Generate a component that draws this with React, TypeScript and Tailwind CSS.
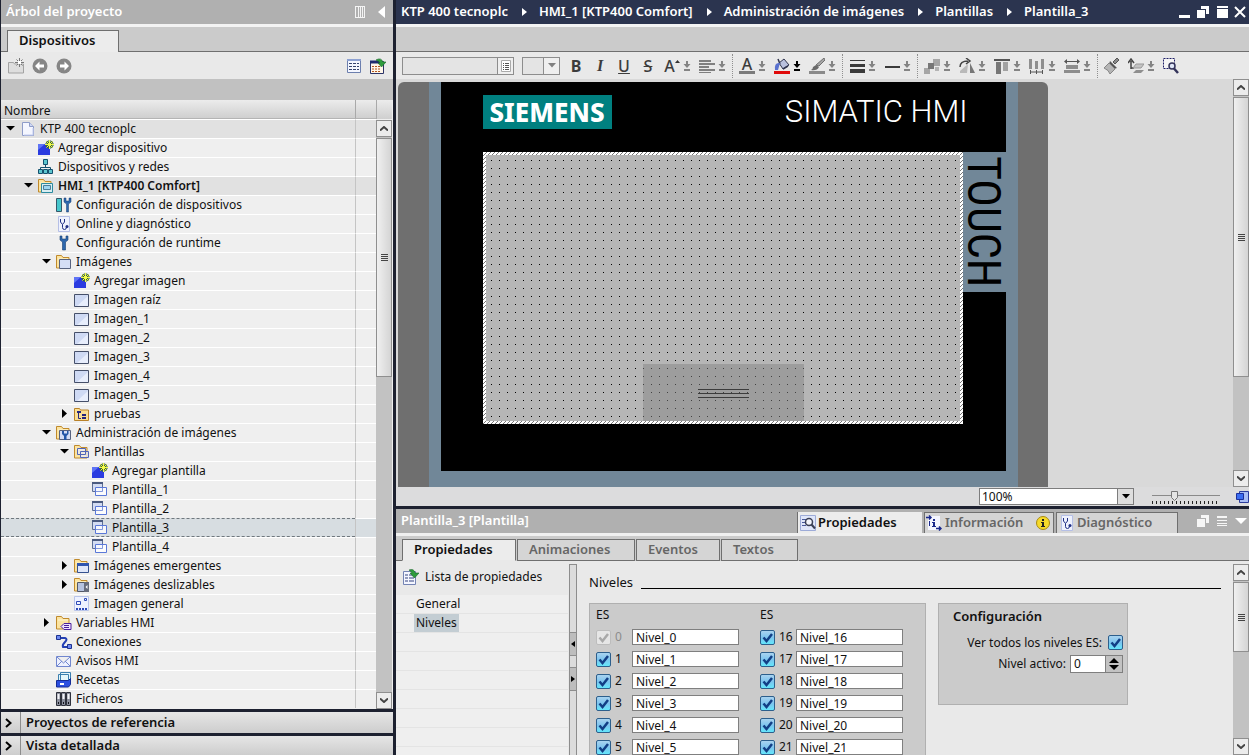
import type { ReactNode } from "react";
import clsx from "clsx";

/* ─── Small glyphs ────────────────────────────────────────────────────── */
const Svg = ({ children, w = 16, h = 16, className }: { children: ReactNode; w?: number; h?: number; className?: string }) => (
  <svg width={w} height={h} viewBox={`0 0 ${w} ${h}`} className={clsx("block shrink-0", className)} aria-hidden="true">
    {children}
  </svg>
);

const folder = (
  <>
    <path d="M.5 1.500h5l1.500 2h6v10.500H.5z" fill="#fbe3a0" stroke="#c08a2c" />
    <path d="M2 5h10" stroke="#fff4cf" />
  </>
);

const icons: Record<string, ReactNode> = {
  page: (
    <>
      <path d="M2.500 1.500h7l4 4v9h-11z" fill="#f4f6ff" stroke="#8e9cc9" />
      <path d="M9.500 1.500v4h4" fill="#cfd8f4" stroke="#8e9cc9" />
      <path d="M4 14h9V7" fill="none" stroke="#c3cdf0" />
    </>
  ),
  add: (
    <>
      <path d="M0 4h12v11H0z" fill="#2a3be0" />
      <path d="M0 4h7L0 10z" fill="#5f74f5" />
      <path d="M11.500 0v9M7 4.500h9M8.500 1.500l6 6M14.500 1.500l-6 6" stroke="#3f6a2a" strokeWidth="2" />
      <path d="M11.500 0v9M7 4.500h9M8.500 1.500l6 6M14.500 1.500l-6 6" stroke="#f4fb4a" />
    </>
  ),
  network: (
    <>
      <path d="M7.500 5v4M2.500 11V8.500h10V11" fill="none" stroke="#14506e" />
      <path d="M5.500.5h4v5h-4zM.5 10.500h4v4h-4zM5.500 10.500h4v4h-4zM10.500 10.500h4v4h-4z" fill="#5cc6cf" stroke="#14506e" />
    </>
  ),
  station: (
    <>
      {folder}
      <path d="M3.500 5.500h11v9h-11z" fill="#d9eef2" stroke="#2b8ba0" />
      <path d="M5.500 7.500h7v4h-7z" fill="#9fd6ef" stroke="#4c7f98" />
    </>
  ),
  devconf: (
    <>
      <path d="M.5 1.500h5v13h-5z" fill="#45c6cc" stroke="#34576a" />
      <path d="M8 1v4l2.500 2v8h2V7L15 5V1h-2v3h-3V1z" fill="#2d67ad" stroke="#173f74" strokeWidth="0.500" />
    </>
  ),
  diag: (
    <>
      <path d="M2.500.5h11v15h-11z" fill="#eef1fd" stroke="#b5bfe6" />
      <path d="M4.500 3v3l2 2.500 2-2.500V3M6.500 8.500v3q0 2 2 2t2-2.500" fill="none" stroke="#1f2f85" />
      <circle cx="11" cy="10.500" r="1.500" fill="#1f2f85" />
    </>
  ),
  wrench: <path d="M4 1v4l2.500 2v8h3V7L12 5V1h-2v3H6V1z" fill="#2d67ad" stroke="#173f74" strokeWidth="0.600" />,
  images: (
    <>
      {folder}
      <path d="M3.500 5.500h11v9h-11z" fill="#d4def5" stroke="#56627f" />
    </>
  ),
  image: (
    <>
      <path d="M.5 2.500h14v12H.5z" fill="#cfdaf4" stroke="#46506a" />
      <path d="M14 4v10H3z" fill="#e8eefc" />
    </>
  ),
  group: (
    <>
      <path d="M.5 2.500h5l1 1.500h8v10.500H.5z" fill="#fbdf92" stroke="#b9822a" />
      <path d="M4 6.500h3M4.500 7v5.500H7" fill="none" stroke="#26267c" />
      <path d="M3 5h4v2H3zM8 8h4v2H8zM8 11h4v2H8z" fill="#26267c" />
    </>
  ),
  admin: (
    <>
      {folder}
      <path d="M3.500 5.500h11v9h-11z" fill="#d4def5" stroke="#56627f" />
      <path d="M6 6v3l2 2v4h2.500v-4l2-2V6H11v2.500H8V6z" fill="#2458a8" />
    </>
  ),
  templates: (
    <>
      {folder}
      <path d="M3.500 4.500h8v6h-8zM6.500 7.500h8v6h-8z" fill="#e8edfb" fillOpacity="0.700" stroke="#5165b8" />
    </>
  ),
  template: (
    <>
      <path d="M.5.5h10v9H.5z" fill="#d3dcf2" stroke="#5d6f96" />
      <path d="M0 1h11" stroke="#4b5b80" strokeWidth="2" />
      <path d="M3.500 5.500h11v8h-11z" fill="#fff" fillOpacity="0.800" stroke="#5a78d8" />
      <path d="M4 9.500h6.500V6" fill="none" stroke="#8197dc" />
    </>
  ),
  popup: (
    <>
      {folder}
      <path d="M3.500 5.500h11v9h-11z" fill="#dfe7fa" stroke="#35518f" />
      <path d="M3 6.500h12" stroke="#2f55b0" strokeWidth="3" />
    </>
  ),
  slide: (
    <>
      {folder}
      <path d="M3.500 5.500h11v9h-11z" fill="#b6c3e0" stroke="#525868" />
      <path d="M10 5h5v10h-5z" fill="#666c7c" />
      <path d="M13.500 8v4l-2-2z" fill="#fff" />
    </>
  ),
  general: (
    <>
      <path d="M.5.5h14v14H.5z" fill="#eef2ff" stroke="#b9c5ea" />
      <path d="M2.500 5.500h4v3h-4zM10.500 2.500h2v2h-2z" fill="none" stroke="#2d4ab8" />
      <path d="M2 13h12" stroke="#2d4ab8" strokeWidth="2" strokeDasharray="2 1" />
    </>
  ),
  vars: (
    <>
      {folder}
      <path d="M5 11.500l3-3h7v6H8z" fill="#efe2ff" stroke="#4a1f9c" />
      <path d="M8 10.500h5M8 12.500h5" stroke="#4a1f9c" />
    </>
  ),
  links: (
    <>
      <path d="M3 4h6q3 1 0 4t-2 5h6" fill="none" stroke="#2440b4" strokeWidth="2" />
      <path d="M.5 1.500h4v4h-4zM11.500 10.500h4v4h-4z" fill="#6f8bf0" stroke="#1c3291" />
    </>
  ),
  mail: <path d="M.5 3.500h14v10H.5zM1 4l6.500 6L14 4M1 13l5-5M14 13L9 8" fill="#edf1ff" stroke="#7187cf" />,
  recipes: (
    <>
      <path d="M4.500.5h10v8h-10zM2.500 2.500h10v8h-10z" fill="#e5f6fa" stroke="#3b7fae" />
      <path d="M.5 8.500h12l2-2v6l-2 2.500H.5z" fill="#2c4fe0" stroke="#152c96" />
      <path d="M4 11h4v2H4z" fill="#fff" />
    </>
  ),
  files: (
    <>
      <path d="M.5 1.500h4v13h-4zM5.500 1.500h4v13h-4zM10.500 1.500h4v13h-4z" fill="#8b8f9d" stroke="#2e313c" />
      <path d="M2.500 3v5M7.500 3v5M12.500 3v5" stroke="#f3f4f8" strokeWidth="2" />
      <path d="M2 11h1v2H2zM7 11h1v2H7zM12 11h1v2h-1z" fill="#11131a" />
    </>
  ),
};

/* ─── Project tree ────────────────────────────────────────────────────── */
type Node = { level: number; icon: string; label: string; open?: boolean; strong?: boolean; selected?: boolean };

const tree: Node[] = [
  { level: 0, icon: "page", label: "KTP 400 tecnoplc", open: true },
  { level: 1, icon: "add", label: "Agregar dispositivo" },
  { level: 1, icon: "network", label: "Dispositivos y redes" },
  { level: 1, icon: "station", label: "HMI_1 [KTP400 Comfort]", open: true, strong: true },
  { level: 2, icon: "devconf", label: "Configuración de dispositivos" },
  { level: 2, icon: "diag", label: "Online y diagnóstico" },
  { level: 2, icon: "wrench", label: "Configuración de runtime" },
  { level: 2, icon: "images", label: "Imágenes", open: true },
  { level: 3, icon: "add", label: "Agregar imagen" },
  { level: 3, icon: "image", label: "Imagen raíz" },
  { level: 3, icon: "image", label: "Imagen_1" },
  { level: 3, icon: "image", label: "Imagen_2" },
  { level: 3, icon: "image", label: "Imagen_3" },
  { level: 3, icon: "image", label: "Imagen_4" },
  { level: 3, icon: "image", label: "Imagen_5" },
  { level: 3, icon: "group", label: "pruebas", open: false },
  { level: 2, icon: "admin", label: "Administración de imágenes", open: true },
  { level: 3, icon: "templates", label: "Plantillas", open: true },
  { level: 4, icon: "add", label: "Agregar plantilla" },
  { level: 4, icon: "template", label: "Plantilla_1" },
  { level: 4, icon: "template", label: "Plantilla_2" },
  { level: 4, icon: "template", label: "Plantilla_3", selected: true },
  { level: 4, icon: "template", label: "Plantilla_4" },
  { level: 3, icon: "popup", label: "Imágenes emergentes", open: false },
  { level: 3, icon: "slide", label: "Imágenes deslizables", open: false },
  { level: 3, icon: "general", label: "Imagen general" },
  { level: 2, icon: "vars", label: "Variables HMI", open: false },
  { level: 2, icon: "links", label: "Conexiones" },
  { level: 2, icon: "mail", label: "Avisos HMI" },
  { level: 2, icon: "recipes", label: "Recetas" },
  { level: 2, icon: "files", label: "Ficheros" },
];

const indent = ["pl-[3px]", "pl-[21px]", "pl-[39px]", "pl-[57px]", "pl-[75px]"];

const headCell = "h-[19px] bg-linear-to-b from-[#ececec] to-[#cfcfcf] border-b border-[#b4b4b4] p-0 font-normal text-left";

function ProjectTree() {
  return (
    <table className="w-full table-fixed border-separate border-spacing-0 text-xs leading-[18px]">
      <thead>
        <tr>
          <th className={clsx(headCell, "pt-[3px] pl-[3px] leading-[15px]")}>Nombre</th>
          <th className={clsx(headCell, "w-[21px] border-l border-l-[#a9a9a9]")} aria-label="Estado" />
        </tr>
      </thead>
      <tbody>
        {tree.map((n) => {
          const top = n.level === 0 || n.strong;
          const bg = n.selected ? "bg-[#d7dde1]" : top ? "bg-[#e1e1e1]" : "bg-[#efefef]";
          const edge = n.selected ? "border-y border-dashed border-[#70787e]" : "border-t border-white";
          return (
            <tr key={n.label}>
              <td className={clsx("h-[19px] p-0", bg, edge)}>
                <div className={clsx("flex h-[17px] items-center", indent[n.level])}>
                  {n.open === undefined ? (
                    <span className="w-4" />
                  ) : (
                    <button type="button" aria-label={n.label} aria-expanded={n.open} className="flex w-4 justify-start pl-0.5">
                      <Svg w={10} h={10}>
                        <path d={n.open ? "M0 2h9L4.500 6.500z" : "M2 0v9l5-4.500z"} fill="#000" />
                      </Svg>
                    </button>
                  )}
                  <Svg>{icons[n.icon]}</Svg>
                  <span className={clsx("ml-1 whitespace-nowrap", n.strong && "font-semibold")}>{n.label}</span>
                </div>
              </td>
              <td className={clsx("h-[19px] border-l border-l-[#c4c4c4] p-0", bg, n.selected ? "border-t border-t-white" : edge)} />
            </tr>
          );
        })}
      </tbody>
    </table>
  );
}

/* ─── Shared controls ─────────────────────────────────────────────────── */
function ScrollBar({ thumb, label }: { thumb: string; label: string }) {
  const end = "flex h-[17px] w-full shrink-0 items-center justify-center border border-[#8f8f8f] bg-[#ececec]";
  return (
    <div className="flex w-4 shrink-0 flex-col bg-[#c2c2c2]" aria-label={label}>
      <button type="button" className={end} aria-label="Subir">
        <Svg w={8} h={5}><path d="M0 4.500L4 1l4 3.500" fill="none" stroke="#444" strokeWidth="2" /></Svg>
      </button>
      <div className={clsx("mt-px flex flex-col items-center justify-center gap-px border border-[#8f8f8f] bg-linear-to-r from-[#f0f0f0] to-[#d4d4d4]", thumb)}>
        <span className="h-px w-[7px] bg-[#444]" />
        <span className="h-px w-[7px] bg-[#444]" />
        <span className="h-px w-[7px] bg-[#444]" />
        <span className="h-px w-[7px] bg-[#444]" />
      </div>
      <div className="flex-1" />
      <button type="button" className={end} aria-label="Bajar">
        <Svg w={8} h={5}><path d="M0 .5L4 4l4-3.500" fill="none" stroke="#444" strokeWidth="2" /></Svg>
      </button>
    </div>
  );
}

function Check({ id, disabled }: { id: string; disabled?: boolean }) {
  return (
    <span className="grid size-[15px] shrink-0">
      <input
        id={id}
        type="checkbox"
        defaultChecked
        disabled={disabled}
        className={clsx(
          "col-start-1 row-start-1 size-[15px] appearance-none rounded-xs border",
          disabled ? "border-[#bdbdbd] bg-[#e6e6e6]" : "border-[#2d5f8c] bg-linear-to-b from-[#a9d3f0] via-[#7cc4ee] to-[#62e6fb]"
        )}
      />
      <Svg w={15} h={15} className="pointer-events-none col-start-1 row-start-1">
        <path d="M3.500 7.500l3 3.500L12 4" fill="none" stroke={disabled ? "#a9a9a9" : "#123f86"} strokeWidth="2.500" />
      </Svg>
    </span>
  );
}

/* ─── Left column ─────────────────────────────────────────────────────── */
function ProjectPanel() {
  return (
    <aside className="flex w-[396px] shrink-0 flex-col border-l border-r-3 border-[#1d2130] bg-[#e9e9e9]" aria-label="Árbol del proyecto">
      <header className="flex h-6 shrink-0 items-center bg-[#b0b0b0] pl-[5px] pr-2">
        <h2 className="flex-1 text-[13px] font-semibold text-white">Árbol del proyecto</h2>
        <button type="button" aria-label="Anclar" className="mr-3">
          <Svg w={11} h={12}><path d="M.5.5h3v11h-3zM5.500 0v12M7.500 0v12M9.500 0v12M0 .5h10M0 11.500h10" fill="none" stroke="#f4f4f4" /></Svg>
        </button>
        <button type="button" aria-label="Contraer panel">
          <Svg w={7} h={12}><path d="M7 0v12L0 6z" fill="#fff" /></Svg>
        </button>
      </header>
      <div className="h-[3px] shrink-0 bg-[#f3f3f3]" />
      <div className="flex h-[25px] shrink-0 items-end bg-[#cbcbcb]">
        <span className="h-px w-1.5 bg-[#6f6f6f]" />
        <button type="button" className="h-[22px] w-28 border border-b-0 border-[#6f6f6f] bg-[#ececec] pb-[3px] pl-[11px] text-left text-[13px] leading-[18px] font-semibold">
          Dispositivos
        </button>
        <span className="h-px flex-1 bg-[#6f6f6f]" />
      </div>
      <div className="flex h-[27px] shrink-0 items-center gap-2 pl-[7px] pr-[7px]">
        <button type="button" aria-label="Nueva carpeta">
          <Svg>
            <path d="M.5 4.500h5l1 1.500h9v9H.5z" fill="#dedede" stroke="#a3a3a3" />
            <path d="M11.500 0v9M7 4.500h9M8.500 1.500l6 6M14.500 1.500l-6 6" stroke="#777" />
            <path d="M10 3h3v3h-3z" fill="#fff" />
          </Svg>
        </button>
        <button type="button" aria-label="Atrás">
          <Svg>
            <circle cx="8" cy="8" r="7.500" fill="#868686" />
            <path d="M7.500 3.500v3H12v3H7.500v3L3 8z" fill="#fff" />
          </Svg>
        </button>
        <button type="button" aria-label="Adelante">
          <Svg>
            <circle cx="8" cy="8" r="7.500" fill="#868686" />
            <path d="M8.500 3.500v3H4v3h4.500v3L13 8z" fill="#fff" />
          </Svg>
        </button>
        <span className="flex-1" />
        <button type="button" aria-label="Vista de detalles">
          <Svg>
            <path d="M1.500 1.500h13v13h-13z" fill="#f3f6ff" stroke="#6c7fae" />
            <path d="M1 2h14" stroke="#8da1d2" strokeWidth="2" />
            <path d="M3 5.500h10M3 8.500h10M3 11.500h10" stroke="#33426e" strokeDasharray="3 1" />
          </Svg>
        </button>
        <button type="button" aria-label="Vista general">
          <Svg>
            <path d="M.5 3.500h13v12H.5z" fill="#fff6e8" stroke="#2b3468" />
            <path d="M0 4h10" stroke="#1f2c6e" strokeWidth="3" />
            <path d="M2 8.500h9M2 11h9M2 13.500h9" stroke="#b5561d" strokeDasharray="2 1" />
            <path d="M6 2q5-3 7 2h3l-4.500 5L8 5h2q-1-2-4-3" fill="#2e9c3c" stroke="#17672a" strokeWidth="0.600" />
          </Svg>
        </button>
      </div>
      <div className="h-[21px] shrink-0 bg-[#c1c1c1]" />
      <div className="flex min-h-0 flex-1 overflow-hidden bg-[#efefef]">
        <div className="min-w-0 flex-1 overflow-hidden">
          <ProjectTree />
        </div>
        <div className="flex w-[17px] flex-col pr-px">
          <div className="h-[19px] shrink-0 border-l border-[#a9a9a9] bg-linear-to-b from-[#ececec] to-[#cfcfcf]" />
          <div className="flex flex-1 pt-px"><ScrollBar thumb="h-[239px]" label="Desplazamiento del árbol" /></div>
        </div>
      </div>
      {["Proyectos de referencia", "Vista detallada"].map((t) => (
        <button key={t} type="button" className="flex h-6 shrink-0 items-center border-t-3 border-[#1d2130] bg-linear-to-b from-[#e6e6e6] to-[#cdcdcd] text-left text-[13px] font-semibold last:h-[22px]">
          <span className="flex h-full w-5 items-center border-r border-[#8d8d8d] pl-1">
            <Svg w={8} h={10}><path d="M1 1l4.500 4L1 9" fill="none" stroke="#000" strokeWidth="2" /></Svg>
          </span>
          <span className="pl-[5px]">{t}</span>
        </button>
      ))}
    </aside>
  );
}

/* ─── Editor header and toolbar ───────────────────────────────────────── */
const crumbs = ["KTP 400 tecnoplc", "HMI_1 [KTP400 Comfort]", "Administración de imágenes", "Plantillas", "Plantilla_3"];

function TitleBar() {
  return (
    <header className="flex h-6 shrink-0 items-center bg-[#2b344f] pl-[5px] pr-[3px] text-white">
      <nav className="flex flex-1 items-center text-[13px] font-semibold whitespace-nowrap" aria-label="Ruta">
        {crumbs.map((c, i) => (
          <span key={c} className="flex items-center">
            {i > 0 && <Svg w={5} h={8} className="mr-3 ml-3.5"><path d="M0 0v8l5-4z" fill="#fff" /></Svg>}
            <a href="#">{c}</a>
          </span>
        ))}
      </nav>
      <div className="flex items-center gap-1.5">
        <button type="button" aria-label="Minimizar"><Svg w={12} h={12}><path d="M0 9h11v3H0z" fill="#fff" /></Svg></button>
        <button type="button" aria-label="Restaurar"><Svg w={12} h={12}><path d="M4 0h8v8H9V3H4zM0 4h8v8H0z" fill="#fff" /></Svg></button>
        <button type="button" aria-label="Maximizar" className="ml-0.5"><Svg w={11} h={12}><path d="M0 0h11v2H0zM0 3h11v9H0z" fill="#fff" /></Svg></button>
        <button type="button" aria-label="Cerrar"><Svg w={12} h={12}><path d="M1 1l10 10M11 1L1 11" stroke="#fff" strokeWidth="2" /></Svg></button>
      </div>
    </header>
  );
}

const Drop = ({ dark }: { dark?: boolean }) => (
  <Svg w={8} h={12} className="ml-[3px]">
    <path d="M3 1h2v3h2.500L4 8 .5 4H3zM1 9h6v2H1z" fill={dark ? "#000" : "#848484"} />
  </Svg>
);

type Tool = { name: string; drop?: boolean; dark?: boolean; art: ReactNode };

const textTools: Tool[] = [
  { name: "Negrita", art: <span className="text-base font-bold">B</span> },
  { name: "Cursiva", art: <span className="font-['Liberation_Serif',serif] text-base font-bold italic">I</span> },
  { name: "Subrayado", art: <span className="text-base font-medium underline">U</span> },
  { name: "Tachado", art: <span className="text-base font-medium line-through">S</span> },
  { name: "Tamaño", drop: true, art: (
    <>
      <span className="text-base font-medium">A</span>
      <Svg w={5} h={12}><path d="M0 3h5L2.500 0z" fill="#333" /></Svg>
    </>
  ) },
  { name: "Alineación", drop: true, art: <Svg><path d="M0 2h12v2H0zM0 5h16v2H0zM0 8h10v2H0zM0 11h16v2H0zM0 14h12v1H0z" fill="#808080" /></Svg> },
];

const colorTools: Tool[] = [
  { name: "Color de texto", drop: true, art: (
    <span className="flex w-4 flex-col items-center"><span className="text-base leading-[13px] font-medium">A</span><span className="h-[3px] w-4 bg-[#7b7b7b]" /></span>
  ) },
  { name: "Color de relleno", drop: true, dark: true, art: (
    <Svg>
      <path d="M5 5l5-4 5 6-6 4z" fill="#b9c1de" stroke="#30354f" />
      <path d="M6 6L4 1M9 11l5-3" fill="none" stroke="#30354f" strokeWidth="1.500" />
      <path d="M1 12q-1-8 5-7l-2 7z" fill="#5a72cf" />
      <path d="M0 13h16v3H0z" fill="#e00b0b" />
    </Svg>
  ) },
  { name: "Color de borde", drop: true, art: (
    <Svg>
      <path d="M15 0l1 2-6 6-3-1z" fill="#a5a5a5" stroke="#6f6f6f" />
      <path d="M7 7l3 2q-2 4-8 3 2-1 2-3z" fill="#6a6a6a" />
      <path d="M0 13h16v3H0z" fill="#8a8a8a" />
    </Svg>
  ) },
];

const lineTools: Tool[] = [
  { name: "Grosor de línea", drop: true, art: <Svg><path d="M1 2h15v1H1zM1 6h15v3H1zM1 11h15v4H1z" fill="#3a3a3a" /></Svg> },
  { name: "Estilo de línea", drop: true, art: <Svg><path d="M1 8h15v2H1z" fill="#3a3a3a" /></Svg> },
];

const arrangeTools: Tool[] = [
  { name: "Orden", drop: true, art: <Svg><path d="M0 10h6v6H0zM9 1h7v7H9z" fill="#a6a6a6" /><path d="M4 5h6v6H4z" fill="#777" /><path d="M11 9h4v4h-4z" fill="#b4b4b4" /></Svg> },
  { name: "Girar", drop: true, art: (
    <Svg>
      <path d="M1 13L9 6l-1 9H1z" fill="#b9b9b9" />
      <path d="M11 5l5 10h-5z" fill="#777" />
      <path d="M1 9q0-6 8-6M7 0l4 3-4 3" fill="none" stroke="#444" strokeWidth="1.500" />
    </Svg>
  ) },
  { name: "Alinear arriba", drop: true, art: <Svg><path d="M0 1h16v2H0z" fill="#555" /><path d="M2 4h5v12H2z" fill="#777" /><path d="M9 4h5v9H9z" fill="#a2a2a2" /></Svg> },
  { name: "Distribuir", drop: true, art: <Svg><path d="M0 1h3v10H0zM6 3h3v8H6zM12 1h3v10h-3z" fill="#8f8f8f" /><path d="M1.500 12v4M7.500 12v4M13.500 12v4M2 14h12" stroke="#555" /></Svg> },
  { name: "Ancho", drop: true, art: <Svg><path d="M0 3.500L3 1v2h10V1l3 2.500L13 6V4H3v2z" fill="#555" /><path d="M2 7h12v4H2zM0 12h16v3H0z" fill="#8d8d8d" /></Svg> },
];

const extraTools: Tool[] = [
  { name: "Copiar formato", art: (
    <Svg>
      <path d="M13 0l2 2-4 4-2-2z" fill="#8a8a8a" stroke="#555" />
      <path d="M6 3l7 7-3 1-5-5z" fill="#555" />
      <path d="M5 5l6 6-5 5q-1-4-6-6z" fill="#b5b5b5" stroke="#858585" />
    </Svg>
  ) },
  { name: "Niveles", drop: true, art: <Svg><path d="M3 11V3M0 5l3-4 3 4M3 10h3" fill="none" stroke="#444" strokeWidth="1.500" /><path d="M8 6h8l-3 4H5z" fill="#c4c4c4" stroke="#999" /><path d="M8 12h8l-3 3H5z" fill="#8f8f8f" /></Svg> },
];

function Tools({ items }: { items: Tool[] }) {
  return (
    <div className="flex items-center gap-2">
      {items.map((t) => (
        <button key={t.name} type="button" aria-label={t.name} className="flex items-center">
          <span className="flex h-4 w-4 items-center justify-center leading-4 text-[#3c3c3c]">{t.art}</span>
          {t.drop && <Drop dark={t.dark} />}
        </button>
      ))}
    </div>
  );
}

const Sep = () => <span className="mx-1.5 h-6 w-px border-l border-dotted border-[#8f8f8f]" />;

function Toolbar() {
  return (
    <div className="flex h-[27px] shrink-0 items-center bg-[#e9e9e9] pl-1.5" role="toolbar" aria-label="Formato">
      <input aria-label="Fuente" className="h-[18px] w-24 border border-[#8d8d8d] bg-[#e4e4e4]" />
      <button type="button" aria-label="Elegir fuente" className="flex h-[18px] w-4 items-center justify-center border border-l-0 border-[#8d8d8d] bg-[#efefef]">
        <Svg w={10} h={12}><path d="M.5.5h9v11h-9z" fill="#fff" stroke="#aaa" /><path d="M2 3.500h6M2 5.500h6M2 7.500h6M2 9.500h6" stroke="#555" strokeDasharray="1 1 5" /></Svg>
      </button>
      <input aria-label="Tamaño de fuente" className="ml-2 h-[18px] w-[22px] border border-[#8d8d8d] bg-[#e4e4e4]" />
      <button type="button" aria-label="Elegir tamaño" className="mr-2 flex h-[18px] w-4 items-center justify-center border border-l-0 border-[#8d8d8d] bg-[#efefef]">
        <Svg w={8} h={5}><path d="M0 0h8L4 4.500z" fill="#808080" /></Svg>
      </button>
      <Tools items={textTools} />
      <Sep />
      <Tools items={colorTools} />
      <Sep />
      <Tools items={lineTools} />
      <Sep />
      <Tools items={arrangeTools} />
      <Sep />
      <Tools items={extraTools} />
      <button type="button" aria-label="Ampliar selección" className="ml-2">
        <Svg>
          <path d="M.5.500h11v10H.5z" fill="#f5f5f5" stroke="#1d1d66" strokeDasharray="2 1" />
          <circle cx="9" cy="8" r="3" fill="#dfe6f8" stroke="#33335a" strokeWidth="1.500" />
          <path d="M11 10.500l4 4.500" stroke="#33335a" strokeWidth="2.500" />
        </Svg>
      </button>
    </div>
  );
}

/* ─── Panel being edited ──────────────────────────────────────────────── */
function TemplateScreen() {
  return (
    <svg width="480" height="272" viewBox="0 0 480 272" className="block shrink-0" role="img" aria-label="Plantilla_3">
      <defs>
        <pattern id="grid" width="8" height="8" patternUnits="userSpaceOnUse">
          <rect width="1" height="1" fill="#000" />
        </pattern>
        <pattern id="hatch" width="4" height="4" patternUnits="userSpaceOnUse">
          <rect width="4" height="4" fill="#fff" />
          <path d="M3 0h1v1h-1zM2 1h1v1h-1zM1 2h1v1h-1zM0 3h1v1h-1z" fill="#777" shapeRendering="crispEdges" />
        </pattern>
      </defs>
      <rect width="480" height="272" fill="url(#hatch)" />
      <rect x="3" y="3" width="474" height="266" fill="#b6b6b6" />
      <rect x="3" y="3" width="474" height="266" fill="url(#grid)" />
      <rect x="160" y="212" width="161" height="57" fill="#848484" fillOpacity="0.500" />
      <path d="M215 237.500h51M215 241.500h51M215 245.500h51" stroke="#3c3c3c" />
    </svg>
  );
}

function Canvas() {
  return (
    <div className="flex min-h-0 flex-1 bg-[#d9d9d9]">
      <div className="min-w-0 flex-1 overflow-hidden pt-[3px] pl-0.5">
        <div className="flex h-full w-[650px] justify-center rounded-t-md bg-[#6f6f6f]">
          <div className="flex w-[589px] flex-col bg-[#718798] px-3">
            <div className="h-[389px] shrink-0 bg-black pl-[42px]">
              <div className="flex h-[70px] items-center justify-between pr-[38px] pb-2.5">
                <span className="flex h-[34px] w-[129px] items-center justify-center bg-[#008080] text-[26px] font-extrabold text-white">SIEMENS</span>
                <span className="font-['Roboto',sans-serif] text-[31px] leading-8 font-light text-white">SIMATIC HMI</span>
              </div>
              <div className="flex">
                <TemplateScreen />
                <div className="flex h-[140px] flex-1 items-center justify-center bg-[#718798] font-['Roboto_Condensed','Liberation_Sans_Narrow','Roboto',sans-serif] text-[46px] leading-[42px] text-black [writing-mode:vertical-rl]">
                  TOUCH
                </div>
              </div>
            </div>
          </div>
        </div>
      </div>
      <ScrollBar thumb="h-[280px]" label="Desplazamiento del editor" />
    </div>
  );
}

function ZoomRow() {
  return (
    <div className="flex h-[19px] shrink-0 items-center justify-end bg-[#dcdcdd]">
      <select aria-label="Zoom" className="h-[17px] w-[139px] appearance-none border border-[#7d7d7d] bg-white pl-0.5 text-xs leading-[15px]" defaultValue="100%">
        <option>100%</option>
      </select>
      <span className="flex h-[17px] w-4 items-center justify-center border border-l-0 border-[#7d7d7d] bg-[#dedede]">
        <Svg w={8} h={5}><path d="M0 0h8L4 4.500z" fill="#000" /></Svg>
      </span>
      <span className="ml-[18px] grid w-[68px]">
        <input type="range" aria-label="Nivel de zoom" defaultValue={33} className="col-start-1 row-start-1 w-full opacity-0" />
        <Svg w={68} h={16} className="pointer-events-none col-start-1 row-start-1">
          <path d="M0 6.500h68" stroke="#8a8a8a" />
          <path d="M0 13.500h68" stroke="#222" strokeWidth="3" strokeDasharray="1 3" />
          <path d="M19.500 2.500h6v6l-3 3-3-3z" fill="#e4e4e4" stroke="#777" />
        </Svg>
      </span>
      <button type="button" aria-label="Ver todo" className="ml-4">
        <Svg w={13} h={14}><path d="M3.500 1.500h9v11h-9z" fill="#a9bdf5" stroke="#2b3c9c" /><path d="M.5 3.500h7v6h-7z" fill="#3a6cf0" stroke="#1b2f9c" /></Svg>
      </button>
    </div>
  );
}

/* ─── Inspector ───────────────────────────────────────────────────────── */
const innerTabs = [
  { name: "Propiedades", w: "w-[114px]", on: true },
  { name: "Animaciones", w: "w-[118px]" },
  { name: "Eventos", w: "w-[84px]" },
  { name: "Textos", w: "w-[77px]" },
];

const levelColumns = [[0, 1, 2, 3, 4, 5], [16, 17, 18, 19, 20, 21]];

function InspectorHeader() {
  return (
    <header className="flex h-6 shrink-0 items-end bg-[#b0b0b0] pl-[5px] text-[13px] font-semibold">
      <h2 className="flex-1 self-center text-white">Plantilla_3 [Plantilla]</h2>
      <button type="button" className="mr-0.5 flex h-[21px] w-[125px] items-center gap-0.5 border-l border-[#6f6f6f] bg-[#ececec] pl-0.5">
        <Svg>
          <path d="M.5.5h15v15H.5z" fill="#dfe6fa" stroke="#9dabd8" />
          <path d="M2 4.500h5M2 7.500h3M2 10.500h4" stroke="#4a5a9c" />
          <circle cx="9" cy="7" r="3.500" fill="#f3f5fb" stroke="#3a3f55" strokeWidth="1.500" />
          <path d="M11.500 9.500l3.500 4" stroke="#3a3f55" strokeWidth="2" />
        </Svg>
        Propiedades
      </button>
      <button type="button" className="mr-0.5 flex h-[21px] w-[130px] items-center gap-[3px] border border-b-0 border-[#6f6f6f] bg-[#d5d5d5] pl-px text-[#666]">
        <Svg>
          <path d="M2 1h12v14H2z" fill="#f4f6ff" />
          <path d="M0 2.500h5M3 .5l2 2-2 2M10 13.500h5M13 11.500l2 2-2 2" fill="none" stroke="#1b2a8c" strokeWidth="1.500" />
          <path d="M7 4h2v2H7zM6 7h3v4h1v1H6v-1h1V8H6zM3 6h1v5H3z" fill="#1b2a8c" />
        </Svg>
        <span className="flex-1 text-left">Información</span>
        <Svg w={14} h={14} className="mr-[3px]">
          <circle cx="7" cy="7" r="6.500" fill="#f6da2a" stroke="#a88a12" />
          <path d="M6 3h2v2H6zM5 6h3v4h1v1H5v-1h1V7H5z" fill="#222" />
        </Svg>
      </button>
      <button type="button" className="mr-[19px] flex h-[21px] w-[122px] items-center gap-0.5 border border-b-0 border-[#6f6f6f] bg-[#d5d5d5] pl-0.5 text-[#666]">
        <Svg>{icons.diag}</Svg>
        Diagnóstico
      </button>
      <div className="mr-0.5 flex items-center gap-2 self-center">
        <button type="button" aria-label="Flotar"><Svg w={12} h={12}><path d="M4 0h8v8H9V3H4zM0 4h8v8H0z" fill="#f6f6f6" /></Svg></button>
        <button type="button" aria-label="Dividir"><Svg w={10} h={12}><path d="M0 1h10v2H0zM0 5h10v1H0zM0 8h10v1H0zM0 10h10v1H0z" fill="#f6f6f6" /></Svg></button>
        <button type="button" aria-label="Ocultar inspector"><Svg w={12} h={12}><path d="M0 3h12L6 9z" fill="#fff" /></Svg></button>
      </div>
    </header>
  );
}

function LevelColumn({ ids }: { ids: number[] }) {
  return (
    <div className="flex w-[164px] flex-col">
      <span className="mb-0.5 h-[18px] text-xs leading-[18px]">ES</span>
      {ids.map((n) => (
        <div key={n} className="flex h-[22px] shrink-0 items-center text-xs">
          <Check id={`lv-${n}`} disabled={n === 0} />
          <label htmlFor={`lv-${n}`} className={clsx("w-[21px] pl-1", n === 0 && "text-[#8c8c8c]")}>{n}</label>
          <input aria-label={`Nombre del nivel ${n}`} defaultValue={`Nivel_${n}`} className="h-4 w-[107px] border border-[#7f7f7f] bg-white pl-[3px] leading-[14px]" />
        </div>
      ))}
    </div>
  );
}

function Inspector() {
  return (
    <section className="flex h-[249px] shrink-0 flex-col overflow-hidden border-t-3 border-[#1d2130]" aria-label="Inspector">
      <InspectorHeader />
      <div className="h-[3px] shrink-0 bg-[#f0f0f0]" />
      <div className="flex h-[25px] shrink-0 items-end bg-[#cbcbcb]">
        <span className="h-px w-1.5 bg-[#6f6f6f]" />
        {innerTabs.map((t) => (
          <button
            key={t.name}
            type="button"
            className={clsx(
              "mr-px h-[22px] border border-[#6f6f6f] pb-0.5 pl-[11px] text-left text-[13px] leading-[18px] font-semibold",
              t.w,
              t.on ? "border-b-[#e9e9e9] bg-[#ececec]" : "bg-[#d5d5d5] text-[#666]"
            )}
          >
            {t.name}
          </button>
        ))}
        <span className="h-px flex-1 bg-[#6f6f6f]" />
      </div>
      <div className="flex min-h-0 flex-1 bg-[#e9e9e9]">
        <div className="flex w-[172px] shrink-0 flex-col pt-1.5">
          <button type="button" className="flex h-5 items-center gap-1.5 pl-[7px] text-xs">
            <Svg>
              <path d="M.5 2.500h12v13H.5z" fill="#f4f6ff" stroke="#7484b4" />
              <path d="M2 6h3M6 6h5M2 9h3M6 9h5M2 12h3M6 12h5" stroke="#33427e" />
              <path d="M6 1q5-2 6 3h4l-4.500 5L7 4h2q-1-2-3-3" fill="#2e9c3c" stroke="#17672a" strokeWidth="0.600" />
            </Svg>
            Lista de propiedades
          </button>
          <ul className="mt-2 flex-1 overflow-hidden bg-[#efefef] text-xs">
            {["General", "Niveles", "", "", "", "", "", ""].map((item, i) => (
              <li key={i} className="flex h-[19px] items-center border-b border-[#e4e4e4] pl-[18px]">
                {item && <button type="button" className={clsx("h-[18px] px-0.5", item === "Niveles" && "bg-[#c3cdd3]")}>{item}</button>}
              </li>
            ))}
          </ul>
        </div>
        <div className="mt-[3px] ml-px flex w-2 shrink-0 flex-col border border-b-0 border-[#8d8d8d] bg-[#dcdcdc] pt-[67px]">
          <button type="button" aria-label="Contraer lista" className="flex h-6 items-center justify-center border-y border-[#8d8d8d] bg-[#bdbdbd]">
            <Svg w={4} h={6}><path d="M4 0v6L0 3z" fill="#000" /></Svg>
          </button>
          <button type="button" aria-label="Expandir lista" className="mt-[11px] flex h-6 items-center justify-center border-y border-[#8d8d8d] bg-[#bdbdbd]">
            <Svg w={4} h={6}><path d="M0 0v6l4-3z" fill="#000" /></Svg>
          </button>
        </div>
        <div className="min-w-0 flex-1 overflow-hidden pt-3 pr-3 pl-3">
          <div className="flex h-5 items-center gap-2">
            <h3 className="text-[13px]">Niveles</h3>
            <span className="mt-2.5 h-px flex-1 bg-black" />
          </div>
          <div className="mt-2.5 flex items-start gap-3">
            <fieldset className="flex w-[337px] shrink-0 border border-[#b0b0b0] bg-[#cbcbcb] pt-0.5 pl-1.5" aria-label="Niveles ES">
              {levelColumns.map((ids) => <LevelColumn key={ids[0]} ids={ids} />)}
            </fieldset>
            <fieldset className="h-[102px] w-[190px] shrink-0 border border-[#b0b0b0] bg-[#cbcbcb] pr-1 pl-3.5 text-xs" aria-label="Configuración">
              <h4 className="mt-px text-[13px] leading-[22px] font-semibold">Configuración</h4>
              <div className="mt-[5px] flex h-[21px] items-center justify-end gap-1.5">
                <label htmlFor="all-levels">Ver todos los niveles ES:</label>
                <Check id="all-levels" />
              </div>
              <div className="flex h-[21px] items-center justify-end">
                <label htmlFor="active-level" className="mr-1">Nivel activo:</label>
                <input id="active-level" defaultValue="0" className="h-[18px] w-9 border border-[#7f7f7f] bg-white pl-[3px]" />
                <span className="flex h-[18px] w-[17px] flex-col items-center justify-center gap-0.5 border border-l-0 border-[#7f7f7f] bg-[#c2c2c2]">
                  <button type="button" aria-label="Aumentar"><Svg w={10} h={5}><path d="M0 5h10L5 0z" fill="#000" /></Svg></button>
                  <button type="button" aria-label="Reducir"><Svg w={10} h={5}><path d="M0 0h10L5 5z" fill="#000" /></Svg></button>
                </span>
              </div>
            </fieldset>
          </div>
        </div>
        <div className="mt-[3px] flex"><ScrollBar thumb="h-[70px]" label="Desplazamiento de propiedades" /></div>
      </div>
    </section>
  );
}

export default function App() {
  return (
    <div className="flex h-screen w-full overflow-hidden bg-[#d9d9d9] font-['Noto_Sans','Open_Sans',sans-serif] text-[#111]">
      <ProjectPanel />
      <main className="flex min-w-0 flex-1 flex-col">
        <TitleBar />
        <div className="h-[3px] shrink-0 bg-[#f3f3f3]" />
        <div className="h-[25px] shrink-0 border-b border-[#6f6f6f] bg-[#cbcbcb]" />
        <Toolbar />
        <Canvas />
        <ZoomRow />
        <Inspector />
      </main>
    </div>
  );
}
